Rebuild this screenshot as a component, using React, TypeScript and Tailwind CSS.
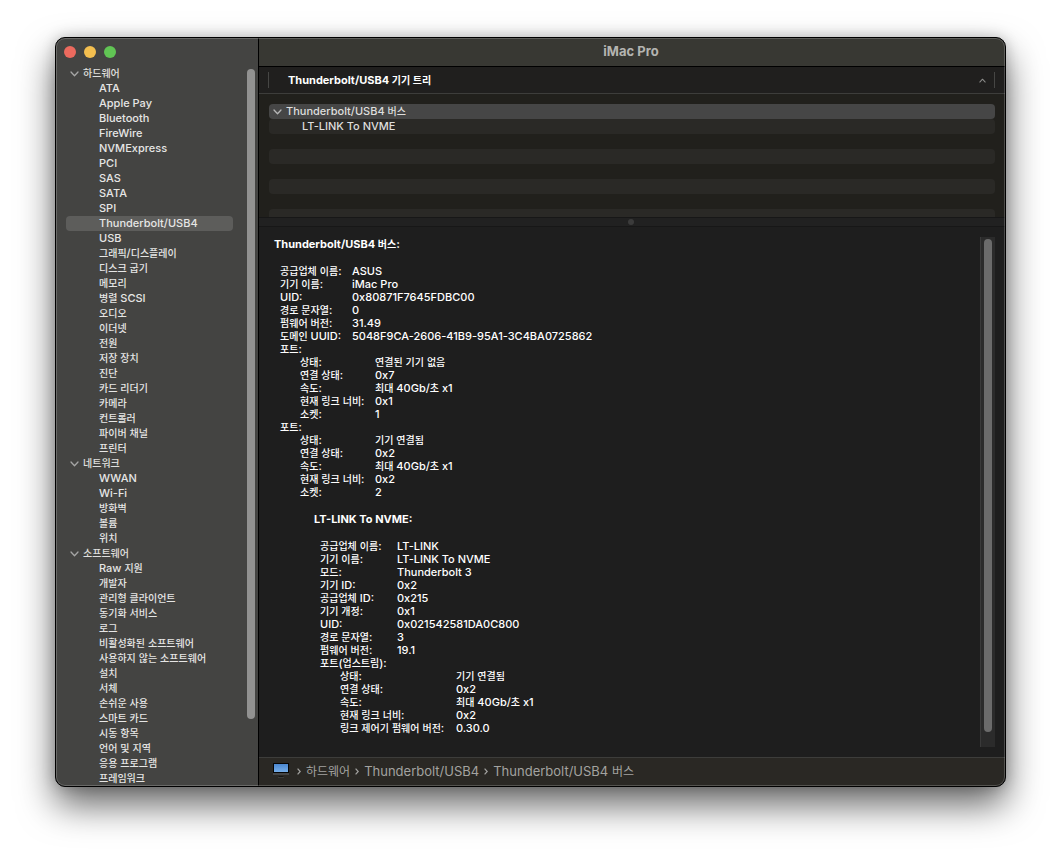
import { Fragment, useState } from 'react';
import clsx from 'clsx';

const SECTIONS = [
  {
    title: '하드웨어',
    items: [
      'ATA', 'Apple Pay', 'Bluetooth', 'FireWire', 'NVMExpress', 'PCI', 'SAS', 'SATA', 'SPI',
      'Thunderbolt/USB4', 'USB', '그래픽/디스플레이', '디스크 굽기', '메모리', '병렬 SCSI', '오디오',
      '이더넷', '전원', '저장 장치', '진단', '카드 리더기', '카메라', '컨트롤러', '파이버 채널', '프린터',
    ],
  },
  {
    title: '네트워크',
    items: ['WWAN', 'Wi-Fi', '방화벽', '볼륨', '위치'],
  },
  {
    title: '소프트웨어',
    items: [
      'Raw 지원', '개발자', '관리형 클라이언트', '동기화 서비스', '로그', '비활성화된 소프트웨어',
      '사용하지 않는 소프트웨어', '설치', '서체', '손쉬운 사용', '스마트 카드', '시동 항목',
      '언어 및 지역', '응용 프로그램', '프레임워크',
    ],
  },
];

type Row = [string, string];

const BUS: Row[] = [
  ['공급업체 이름:', 'ASUS'],
  ['기기 이름:', 'iMac Pro'],
  ['UID:', '0x80871F7645FDBC00'],
  ['경로 문자열:', '0'],
  ['펌웨어 버전:', '31.49'],
  ['도메인 UUID:', '5048F9CA-2606-41B9-95A1-3C4BA0725862'],
];

const PORTS: Row[][] = [
  [
    ['상태:', '연결된 기기 없음'],
    ['연결 상태:', '0x7'],
    ['속도:', '최대 40Gb/초 x1'],
    ['현재 링크 너비:', '0x1'],
    ['소켓:', '1'],
  ],
  [
    ['상태:', '기기 연결됨'],
    ['연결 상태:', '0x2'],
    ['속도:', '최대 40Gb/초 x1'],
    ['현재 링크 너비:', '0x2'],
    ['소켓:', '2'],
  ],
];

const DEVICE: Row[] = [
  ['공급업체 이름:', 'LT-LINK'],
  ['기기 이름:', 'LT-LINK To NVME'],
  ['모드:', 'Thunderbolt 3'],
  ['기기 ID:', '0x2'],
  ['공급업체 ID:', '0x215'],
  ['기기 개정:', '0x1'],
  ['UID:', '0x021542581DA0C800'],
  ['경로 문자열:', '3'],
  ['펌웨어 버전:', '19.1'],
];

const UPSTREAM: Row[] = [
  ['상태:', '기기 연결됨'],
  ['연결 상태:', '0x2'],
  ['속도:', '최대 40Gb/초 x1'],
  ['현재 링크 너비:', '0x2'],
  ['링크 제어기 펌웨어 버전:', '0.30.0'],
];

// Hangul is drawn one step smaller so it sits evenly next to the Latin text
function Label({ text, large = false }: { text: string; large?: boolean }) {
  return (
    <>
      {text.split(/([가-힣]+)/).map((part, i) =>
        i % 2 ? (
          <span key={i} className={large ? 'text-[12px]' : 'text-[10px]'}>{part}</span>
        ) : (
          <Fragment key={i}>{part}</Fragment>
        )
      )}
    </>
  );
}

function Chevron({ className }: { className?: string }) {
  return (
    <svg viewBox="0 0 9 6" className={clsx('shrink-0', className)} fill="none" stroke="currentColor" strokeWidth="1.3" strokeLinecap="round" strokeLinejoin="round">
      <path d="M1 1l3.5 3.7L8 1" />
    </svg>
  );
}

function Separator() {
  return (
    <svg viewBox="0 0 4 7" className="h-[7px] w-1 shrink-0" fill="none" stroke="currentColor" strokeWidth="1.2">
      <path d="M0.6 0.6l2.6 2.9L0.6 6.4" />
    </svg>
  );
}

function MonitorIcon() {
  return (
    <svg viewBox="0 0 16 16" className="h-4 w-4 shrink-0">
      <defs>
        <linearGradient id="screen" x1="0" y1="0" x2="0" y2="1">
          <stop offset="0" stopColor="#4a86cf" />
          <stop offset="1" stopColor="#76aeea" />
        </linearGradient>
      </defs>
      <rect x="0" y="0" width="16" height="10" fill="#050505" />
      <rect x="1" y="1" width="14" height="8" fill="url(#screen)" />
      <rect x="0" y="10" width="16" height="2" fill="#454545" />
      <path d="M6 13h4l1 2H5z" fill="#151515" />
      <rect x="5" y="14" width="6" height="1" fill="#3c3c3a" />
    </svg>
  );
}

function InfoTable({ rows, className }: { rows: Row[]; className: string }) {
  return (
    <table className="border-collapse">
      <tbody>
        {rows.map(([name, value]) => (
          <tr key={name}>
            <th scope="row" className={clsx('p-0 text-left font-medium whitespace-nowrap', className)}>
              <div className="h-[13px]"><Label text={name} /></div>
            </th>
            <td className="p-0 whitespace-nowrap">
              <div className="h-[13px]"><Label text={value} /></div>
            </td>
          </tr>
        ))}
      </tbody>
    </table>
  );
}

function Sidebar({ selected, onSelect }: { selected: string; onSelect: (name: string) => void }) {
  return (
    <aside className="flex w-[203px] shrink-0 flex-col border-r border-black bg-[#444442]">
      <div className="flex h-[28px] items-center gap-2 pl-2">
        <button aria-label="닫기" className="size-3 rounded-full bg-[#ec6a5e]" />
        <button aria-label="최소화" className="size-3 rounded-full bg-[#f4bf4f]" />
        <button aria-label="확대" className="size-3 rounded-full bg-[#61c554]" />
      </div>
      <div className="flex flex-1">
        <nav className="min-w-0 flex-1 pl-[10px] text-[#e6e6e5]">
          {SECTIONS.map((section) => (
            <div key={section.title}>
              <button className="flex h-[15px] w-full items-center gap-1 pl-1 text-left text-[#e0e0df]">
                <Chevron className="mt-px h-[6px] w-[9px] text-[#a6a6a5]" />
                <span><Label text={section.title} /></span>
              </button>
              <ul>
                {section.items.map((item) => (
                  <li key={item}>
                    <button
                      onClick={() => onSelect(item)}
                      className={clsx(
                        'block h-[15px] w-full rounded pl-[33px] text-left leading-[15px] whitespace-nowrap',
                        item === selected && 'bg-[#5d5d5b]'
                      )}
                    >
                      <Label text={item} />
                    </button>
                  </li>
                ))}
              </ul>
            </div>
          ))}
        </nav>
        <div className="w-[25px] pt-[3px] pr-[3px]">
          <div className="ml-auto h-[650px] w-2 rounded-full bg-[#929291]" />
        </div>
      </div>
    </aside>
  );
}

function DeviceTree() {
  return (
    <section className="shrink-0 bg-[#21201c]">
      <div className="flex h-[27px] items-center border-b border-[#3d3d3b] bg-[#201f1e] pr-[10px] pl-[9px]">
        <div className="flex h-4 flex-1 items-center justify-between border-x border-[#464644] pr-2 pl-[19px]">
          <h2 className="font-bold text-white"><Label text="Thunderbolt/USB4 기기 트리" /></h2>
          <Chevron className="h-[5px] w-[7px] rotate-180 text-[#8d8d8b]" />
        </div>
      </div>
      <div className="h-[123px] overflow-hidden px-[10px] pt-[10px] text-[#dededd]">
        <button className="flex h-[15px] w-full items-center gap-1 rounded bg-[#464646] pl-1 text-left">
          <Chevron className="h-[6px] w-[9px] text-[#b5b5b5]" />
          <span><Label text="Thunderbolt/USB4 버스" /></span>
        </button>
        <button className="block h-[15px] w-full rounded bg-[#2a2926] pl-[33px] text-left leading-[15px]">
          LT-LINK To NVME
        </button>
        <div className="mt-[15px] h-[15px] rounded bg-[#2a2926]" />
        <div className="mt-[15px] h-[15px] rounded bg-[#2a2926]" />
        <div className="mt-[15px] h-[15px] rounded bg-[#2a2926]" />
      </div>
    </section>
  );
}

function Details() {
  return (
    <section className="flex flex-1 pt-[10px] pr-[10px] pb-[10px] pl-[15px] text-white">
      <div className="flex-1 pt-px leading-[13px]">
        <h3 className="mb-[13px] h-[14px] font-bold"><Label text="Thunderbolt/USB4 버스:" /></h3>
        <div className="pl-[6px]">
          <InfoTable rows={BUS} className="w-[72px] min-w-[72px]" />
          {PORTS.map((port, i) => (
            <div key={i}>
              <div className="h-[13px]"><Label text="포트:" /></div>
              <div className="pl-5">
                <InfoTable rows={port} className="w-[75px] min-w-[75px]" />
              </div>
            </div>
          ))}
        </div>
        <div className="pt-[14px] pl-10">
          <h3 className="mb-[13px] h-[14px] font-bold">LT-LINK To NVME:</h3>
          <div className="pl-[6px]">
            <InfoTable rows={DEVICE} className="w-[77px] min-w-[77px]" />
            <div className="h-[13px]"><Label text="포트(업스트림):" /></div>
            <div className="pl-5">
              <InfoTable rows={UPSTREAM} className="w-[116px] min-w-[116px]" />
            </div>
          </div>
        </div>
      </div>
      <div className="w-[15px] border-l border-[#3a3a3a] bg-[#2b2b2b] px-[3px] pt-[2px]">
        <div className="h-[97%] w-2 rounded-full bg-[#6b6b6b]" />
      </div>
    </section>
  );
}

export default function App() {
  const [selected, setSelected] = useState('Thunderbolt/USB4');

  return (
    <div className="min-h-screen bg-white px-[55px] pt-[37px] pb-[73px] font-['Inter','Noto_Sans_CJK_KR',sans-serif] text-[11px] leading-[15px] font-medium">
      <div className="relative flex overflow-hidden rounded-[10px] border border-black bg-[#1e1e1e] shadow-[0_18px_36px_rgba(0,0,0,0.6),0_0_14px_rgba(0,0,0,0.2)]">
        <Sidebar selected={selected} onSelect={setSelected} />
        <main className="flex min-w-0 flex-1 flex-col">
          <header className="flex h-[29px] items-center justify-center border-b border-black bg-[#383833] pr-0.5 pb-0.5">
            <h1 className="text-[13px] font-bold text-[#b4b4b1]">iMac Pro</h1>
          </header>
          <DeviceTree />
          <div className="flex h-[10px] items-center justify-center border-y border-[#171717] bg-[#212121] pr-0.5">
            <span className="size-[6px] rounded-full bg-[#3b3b3b]" />
          </div>
          <Details />
          <footer className="flex h-[29px] items-center gap-1 border-t border-[#3d3d3b] bg-[#2a2824] pb-0.5 pl-[14px] text-[13px] font-normal text-[#a3a3a0]">
            <MonitorIcon />
            <nav className="flex items-center gap-[5px] pl-1">
              <Separator />
              <a href="#hardware"><Label text="하드웨어" large /></a>
              <Separator />
              <a href="#thunderbolt">Thunderbolt/USB4</a>
              <Separator />
              <a href="#bus"><Label text="Thunderbolt/USB4 버스" large /></a>
            </nav>
          </footer>
        </main>
        <div className="pointer-events-none absolute inset-0 rounded-[9px] border border-white/20" />
      </div>
    </div>
  );
}
